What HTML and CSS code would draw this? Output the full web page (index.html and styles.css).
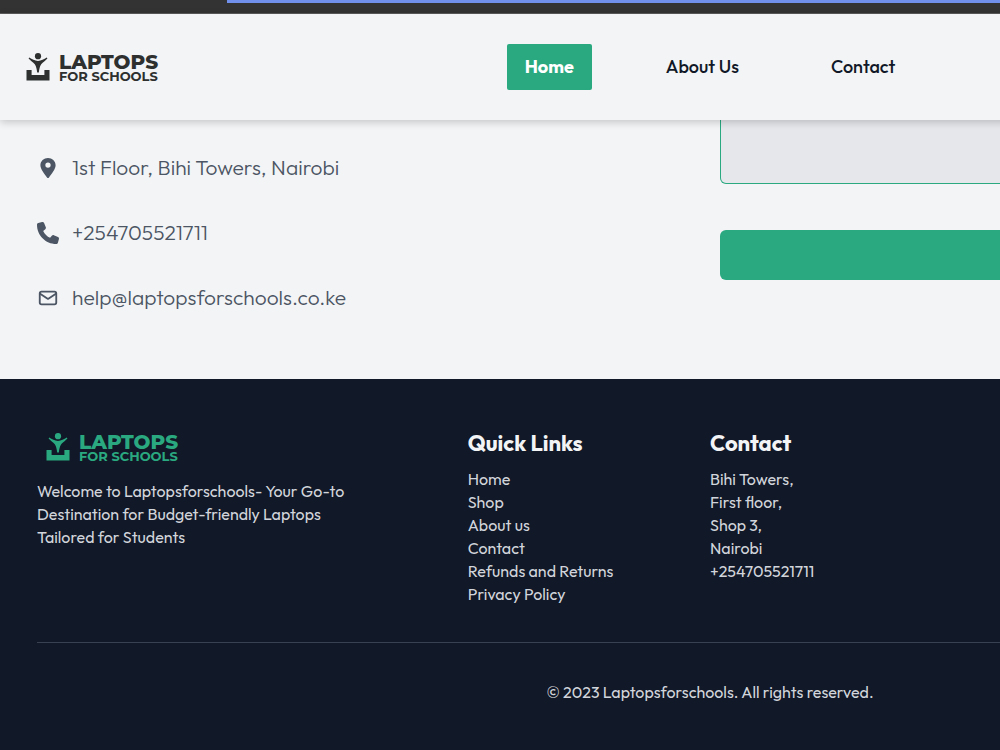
FILE: index.html
```html
<!DOCTYPE html>
<html lang="en">

<head>
    <meta charset="UTF-8">
    <meta name="viewport" content="width=device-width, initial-scale=1.0">
    <title>Laptops for Schools</title>
    <link rel="stylesheet" href="styles.css">
</head>

<body>
    <svg class="sprite" aria-hidden="true">
        <symbol id="logo-mark" viewBox="0 0 24 28">
            <circle cx="12" cy="3.2" r="3.1" />
            <path d="M3.2 4.600C6 6.200 8.800 8 12 8S18 6.200 20.800 4.600L21.400 5.600C19.400 7.800 17 9.400 15.200 11.200C13.700 13.400 13.300 16 12.800 19.500H11.200C10.700 16 10.300 13.400 8.800 11.200C7 9.400 4.600 7.800 2.600 5.600Z" />
            <path d="M0.500 17H5.600V22H18.400V17H23.500V27.500H0.500Z" />
        </symbol>
    </svg>

    <div class="page">
        <div class="topbar">
            <div class="topbar-progress"></div>
        </div>

        <header class="header">
            <a class="logo" href="#">
                <svg class="logo-mark" aria-hidden="true"><use href="#logo-mark" /></svg>
                <span class="logo-text">
                    <span class="logo-name">LAPTOPS</span>
                    <span class="logo-tag">FOR SCHOOLS</span>
                </span>
            </a>
            <nav class="nav">
                <a class="nav-link active" href="#">Home</a>
                <a class="nav-link" href="#">About Us</a>
                <a class="nav-link" href="#">Contact</a>
            </nav>
        </header>

        <main class="contact">
            <ul class="contact-list">
                <li>
                    <svg class="icon" viewBox="0 0 24 24" aria-hidden="true">
                        <path fill="currentColor" fill-rule="evenodd" d="M12 1C7.500 1 3.700 4.400 3.700 8.900C3.700 13 8.300 18.800 11.100 22.500Q12 23.500 12.900 22.500C15.700 18.800 20.300 13 20.300 8.900C20.300 4.400 16.500 1 12 1ZM12 5.900A2.900 2.900 0 1 1 12 11.700A2.900 2.900 0 1 1 12 5.900Z" />
                    </svg>
                    <span>1st Floor, Bihi Towers, Nairobi</span>
                </li>
                <li>
                    <svg class="icon" viewBox="0 0 512 512" aria-hidden="true">
                        <path fill="currentColor" d="M164.900 24.600c-7.700-18.600-28-28.500-47.400-23.200l-88 24C12.100 30.200 0 46 0 64c0 247.400 200.600 448 448 448c18 0 33.800-12.100 38.600-29.500l24-88c5.300-19.400-4.600-39.700-23.200-47.400l-96-40c-16.300-6.800-35.200-2.100-46.300 11.600L304.700 368C234.300 334.700 177.300 277.700 144 207.300L193.300 167c13.700-11.200 18.400-30 11.600-46.300l-40-96z" />
                    </svg>
                    <span>+254705521711</span>
                </li>
                <li>
                    <svg class="icon" viewBox="0 0 24 24" aria-hidden="true">
                        <g fill="none" stroke="currentColor" stroke-width="2" stroke-linejoin="round">
                            <rect x="3" y="5" width="18" height="14" rx="2" />
                            <path d="M3 7L12 13L21 7" />
                        </g>
                    </svg>
                    <span>help@laptopsforschools.co.ke</span>
                </li>
            </ul>

            <form class="contact-form">
                <textarea class="message" aria-label="Message"></textarea>
                <button class="send" type="button" aria-label="Send message"></button>
            </form>
        </main>

        <footer class="footer">
            <div class="footer-columns">
                <div class="about">
                    <a class="logo logo-green" href="#">
                        <svg class="logo-mark" aria-hidden="true"><use href="#logo-mark" /></svg>
                        <span class="logo-text">
                            <span class="logo-name">LAPTOPS</span>
                            <span class="logo-tag">FOR SCHOOLS</span>
                        </span>
                    </a>
                    <p>Welcome to Laptopsforschools- Your Go-to Destination for Budget-friendly Laptops Tailored for Students</p>
                </div>
                <div>
                    <h2>Quick Links</h2>
                    <ul>
                        <li><a href="#">Home</a></li>
                        <li><a href="#">Shop</a></li>
                        <li><a href="#">About us</a></li>
                        <li><a href="#">Contact</a></li>
                        <li><a href="#">Refunds and Returns</a></li>
                        <li><a href="#">Privacy Policy</a></li>
                    </ul>
                </div>
                <div>
                    <h2>Contact</h2>
                    <ul>
                        <li>Bihi Towers,</li>
                        <li>First floor,</li>
                        <li>Shop 3,</li>
                        <li>Nairobi</li>
                        <li>+254705521711</li>
                    </ul>
                </div>
            </div>
            <p class="copyright">© 2023 Laptopsforschools. All rights reserved.</p>
        </footer>
    </div>
</body>

</html>
```
FILE: styles.css
```css
* {
    margin: 0;
    padding: 0;
    box-sizing: border-box;
}

body {
    font-family: "Outfit", "Lato", sans-serif;
    background-color: #111827;
    overflow-x: hidden;
}

a {
    color: inherit;
    text-decoration: none;
}

ul {
    list-style: none;
}

.sprite {
    display: none;
}

/* The desktop layout never gets narrower than this */
.page {
    min-width: 1420px;
    background-color: #f3f4f6;
}

/* Loading bar */
.topbar {
    height: 14px;
    padding-left: 227px;
    background-color: #333333;
    border-bottom: 1px solid #5c5c5c;
}

.topbar-progress {
    height: 3px;
    background-color: #7090ec;
}

/* Header */
.header {
    position: relative;
    z-index: 1;
    display: grid;
    grid-template-columns: 1fr auto 1fr;
    align-items: center;
    padding: 30px 26px;
    background-color: #f3f4f6;
    box-shadow: 0 2px 8px rgba(0, 0, 0, 0.2);
}

.logo {
    display: flex;
    align-items: center;
    gap: 9px;
    height: 38px;
    color: #2d302f;
}

.logo-mark {
    width: 24px;
    height: 28px;
    fill: currentColor;
}

.logo-text {
    display: flex;
    flex-direction: column;
    padding-top: 2px;
    font-family: "Montserrat", "Lato", sans-serif;
    font-weight: 800;
}

.logo-name {
    font-size: 20px;
    line-height: 16px;
}

.logo-tag {
    font-size: 13px;
    line-height: 13px;
    font-weight: 700;
}

.nav {
    display: flex;
    gap: 56px;
}

.nav-link {
    padding: 11px 18px;
    border-radius: 2px;
    font-size: 18px;
    line-height: 24px;
    font-weight: 500;
    color: #111827;
}

.nav-link.active {
    background-color: #2aa980;
    color: #ffffff;
    font-weight: 700;
}

/* Contact details and form */
.contact {
    display: grid;
    grid-template-columns: 1fr 1fr;
    gap: 20px;
    padding: 0 37px 68px;
}

.contact-list {
    display: flex;
    flex-direction: column;
    gap: 38px;
    padding-top: 34px;
    color: #4b5563;
    font-size: 21px;
    line-height: 27px;
    font-weight: 300;
}

.contact-list li {
    display: flex;
    align-items: center;
    gap: 13px;
}

.icon {
    width: 22px;
    height: 22px;
}

.contact-form {
    display: flex;
    flex-direction: column;
    gap: 46px;
}

.message {
    height: 64px;
    border: 1px solid #2aa980;
    border-top: 0;
    border-radius: 0 0 6px 6px;
    background-color: #e5e7eb;
    resize: none;
}

.send {
    height: 50px;
    border: 0;
    border-radius: 6px;
    background-color: #2aa980;
}

/* Footer */
.footer {
    padding: 46px 37px;
    background-color: #111827;
    color: #d1d5db;
    font-size: 16px;
    line-height: 23px;
}

.footer-columns {
    display: grid;
    grid-template-columns: 32fr 18fr 50fr;
    padding-bottom: 36px;
    border-bottom: 1px solid #374151;
}

.footer h2 {
    margin-bottom: 7px;
    color: #f3f4f6;
    font-size: 22px;
    line-height: 36px;
    font-weight: 700;
}

.about p {
    max-width: 330px;
}

.logo-green {
    height: 44px;
    margin-bottom: 11px;
    padding-left: 9px;
    color: #2aa980;
}

.copyright {
    padding-top: 38px;
    text-align: center;
}
```
